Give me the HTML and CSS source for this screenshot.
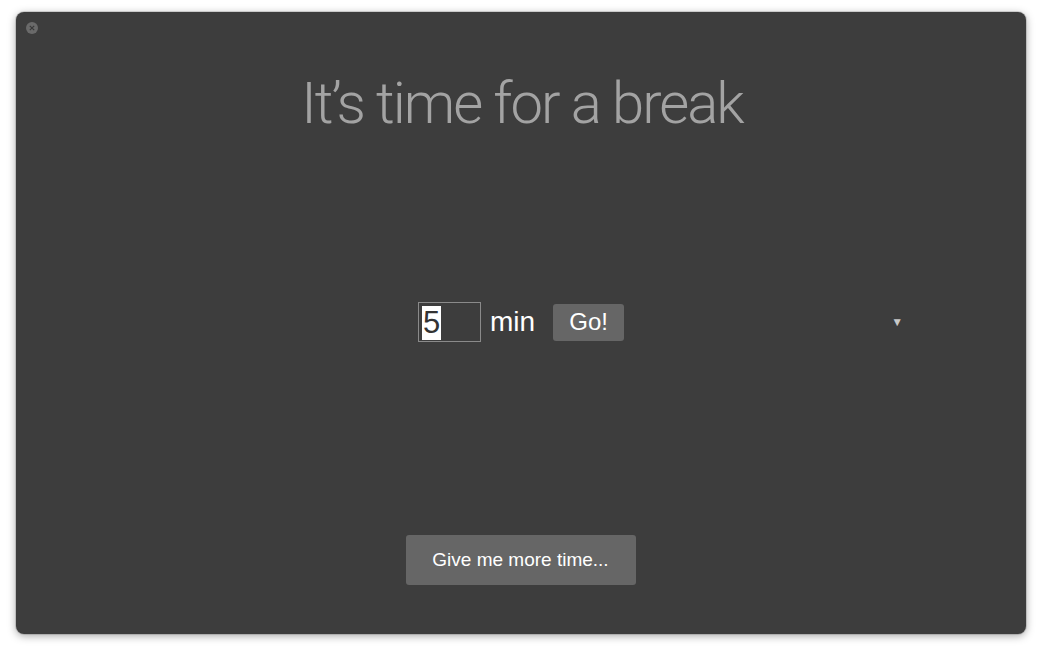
FILE: index.html
```html
<!DOCTYPE html>
<html>
<head>
<meta charset="utf-8">
<link rel="stylesheet" href="styles.css">
</head>
<body>
<div class="window">
  <div class="titlebar">
    <span class="close"><svg width="12" height="12" viewBox="0 0 12 12"><circle cx="6" cy="6" r="6" fill="#6a6a6a"/><path d="M3.8 3.8 L8.2 8.2 M8.2 3.8 L3.8 8.2" stroke="#3a3a3a" stroke-width="1.2"/></svg></span>
  </div>
  <h1 class="headline">It’s time for a break</h1>
  <div class="controls">
    <div class="field"><span class="sel">5</span></div>
    <span class="unit">min</span>
    <button class="go">Go!</button>
    <span class="arrow">▼</span>
  </div>
  <div class="footer">
    <button class="more">Give me more time...</button>
  </div>
</div>
</body>
</html>
```
FILE: styles.css
```css
html, body { margin: 0; padding: 0; background: #fff; }
body { width: 1042px; height: 654px; padding: 12px 16px 20px 16px; box-sizing: border-box; font-family: "Liberation Sans", Arial, sans-serif; }
.window {
  width: 1010px; height: 622px; background: #3d3d3d; border-radius: 8px;
  box-shadow: 0 2px 8px rgba(0,0,0,0.35), 0 0 0 1px rgba(0,0,0,0.12);
  display: flex; flex-direction: column; position: relative; box-sizing: border-box;
}
.titlebar { height: 22px; padding: 10px 0 0 10px; box-sizing: border-box; display: flex; }
.close { width: 12px; height: 12px; display: block; }
.close svg { display: block; }
.headline {
  margin: 34px 0 0 0; text-align: center; font-family: Roboto, "Open Sans", sans-serif; font-weight: 300;
  font-size: 58px; color: #a3a3a3; line-height: 70px; letter-spacing: -2px;
  padding-left: 2px;
}
.controls { display: flex; align-items: center; margin: 164px 0 0 402px; height: 40px; }
.field { width: 63px; height: 40px; border: 1px solid #8a8a8a; box-sizing: border-box; padding: 3px 0 0 3px; display: flex; }
.sel { background: #fff; color: #333; font-size: 31px; line-height: 34px; width: 19px; height: 34px; display: block; text-align: left; padding-left: 1px; box-sizing: border-box; }
.unit { color: #fff; font-size: 28px; margin-left: 9px; line-height: 40px; }
.go { margin-left: 18px; background: #666; color: #fff; border: none; border-radius: 3px; width: 71px; height: 37px; font-family: "Liberation Sans", Arial, sans-serif; font-size: 24px; padding: 0; }
.arrow { color: #c8c8c8; font-size: 12px; margin-left: 267px; }
.footer { margin-top: 193px; display: flex; justify-content: center; padding-right: 1px; }
.more { background: #666; color: #fff; border: none; border-radius: 3px; width: 230px; height: 50px; font-family: "Liberation Sans", Arial, sans-serif; font-size: 19px; padding: 0; }
```
